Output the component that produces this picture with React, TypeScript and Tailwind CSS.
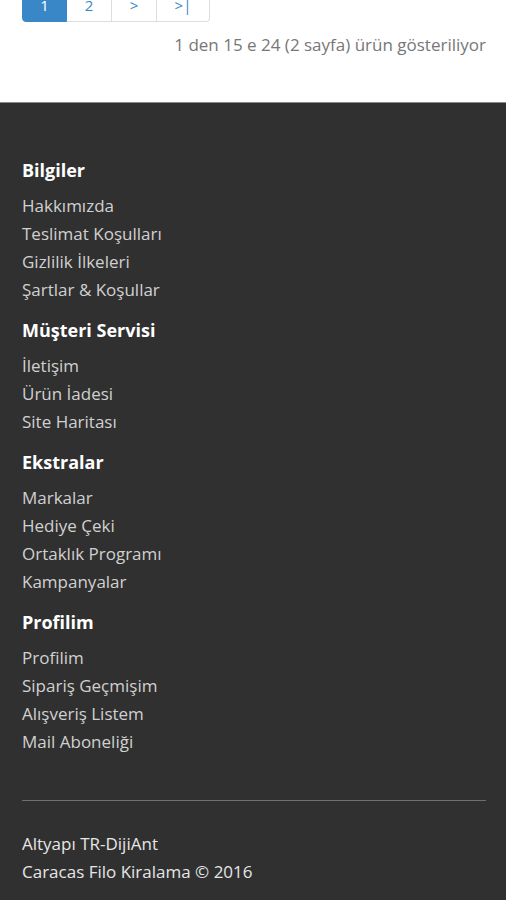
import React from 'react';

const sections = [
  { title: 'Bilgiler', links: ['Hakkımızda', 'Teslimat Koşulları', 'Gizlilik İlkeleri', 'Şartlar & Koşullar'] },
  { title: 'Müşteri Servisi', links: ['İletişim', 'Ürün İadesi', 'Site Haritası'] },
  { title: 'Ekstralar', links: ['Markalar', 'Hediye Çeki', 'Ortaklık Programı', 'Kampanyalar'] },
  { title: 'Profilim', links: ['Profilim', 'Sipariş Geçmişim', 'Alışveriş Listem', 'Mail Aboneliği'] },
];

const pages = ['1', '2', '>', '>|'];

export default function App() {
  return (
    <div className="min-h-[900px] bg-[#303030] font-['Open_Sans',sans-serif] overflow-hidden">
      <div className="bg-white pl-[22px] pr-[20px] pb-[47px]">
        <div className="-mt-[12px] flex">
          {pages.map((p, i) => (
            <a
              key={p}
              href="#"
              className={`flex h-[34px] w-[45px] items-center justify-center border text-[15px] ${
                i === 0
                  ? 'rounded-l-[4px] border-[#3a87c8] bg-[#3a87c8] text-white'
                  : 'border-l-0 border-[#dddddd] bg-white text-[#3a87c8]'
              } ${i === pages.length - 1 ? 'w-[53px] rounded-r-[4px]' : ''}`}
            >
              {p}
            </a>
          ))}
        </div>
        <div className="mt-[13px] text-right text-[17px] leading-[20px] text-[#777777]">
          1 den 15 e 24 (2 sayfa) ürün gösteriliyor
        </div>
      </div>

      <footer className="border-t border-[#8a8a8a] pl-[22px] pr-[20px] pt-[55px] pb-[14px]">
        <div className="flex flex-col gap-[14px]">
          {sections.map((s) => (
            <div key={s.title}>
              <h5 className="text-[18px] font-bold leading-[24px] text-white">{s.title}</h5>
              <ul className="mt-[10px]">
                {s.links.map((l) => (
                  <li key={l}>
                    <a href="#" className="text-[17px] leading-[28px] text-[#d0d0d0]">
                      {l}
                    </a>
                  </li>
                ))}
              </ul>
            </div>
          ))}
        </div>
        <hr className="mt-[44px] border-t border-[#707070]" />
        <div className="mt-[29px] text-[17px] leading-[28px] text-[#e6e6e6]">
          <p>Altyapı TR-DijiAnt</p>
          <p>Caracas Filo Kiralama © 2016</p>
        </div>
      </footer>
    </div>
  );
}
